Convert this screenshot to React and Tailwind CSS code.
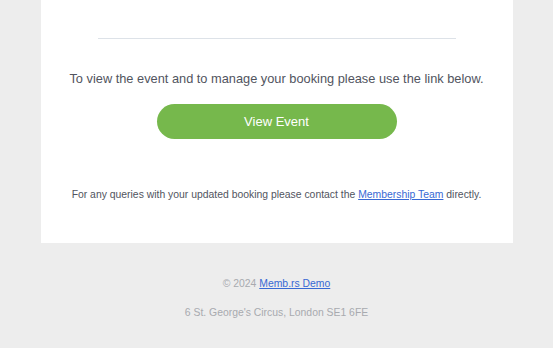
import React from 'react';

export default function App() {
  return (
    <div className="min-h-screen bg-[#ededed] font-['Liberation_Sans',Arial,sans-serif] text-[#51545e]">
      <div className="mx-auto w-[472px] bg-white px-[57px] pt-[38px] pb-[40px]">
        <div className="h-px bg-[#dde2e8]" />
        <p className="mt-[30px] -mx-[40px] whitespace-nowrap text-center text-[12.8px] leading-[20px]">
          To view the event and to manage your booking please use the link below.
        </p>
        <div className="mt-[15px] flex justify-center">
          <a
            href="#"
            className="flex h-[35px] w-[240px] items-center justify-center rounded-full bg-[#76b84c] text-[13px] text-white"
          >
            View Event
          </a>
        </div>
        <p className="mt-[48px] -mx-[40px] whitespace-nowrap text-center text-[10.4px] leading-[16px]">
          For any queries with your updated booking please contact the{' '}
          <a href="#" className="text-[#3869d4] underline">Membership Team</a> directly.
        </p>
      </div>
      <div className="pt-[33px] text-center text-[10.4px] leading-[16px] text-[#a8aaaf]">
        <p>
          © 2024 <a href="#" className="text-[#3869d4] underline">Memb.rs Demo</a>
        </p>
        <p className="mt-[13px]">6 St. George's Circus, London SE1 6FE</p>
      </div>
    </div>
  );
}
